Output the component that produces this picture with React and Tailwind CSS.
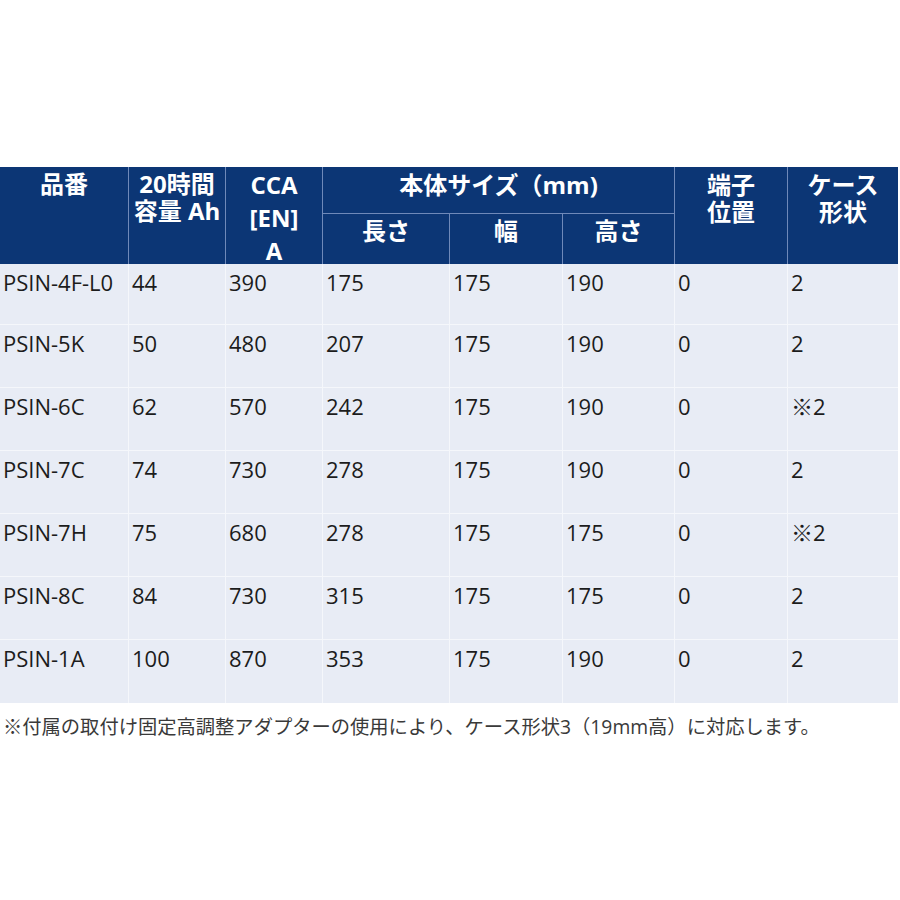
import React from "react";

const FONT = { fontFamily: '"Open Sans", "Noto Sans CJK JP", sans-serif' };

const rows = [
  ["PSIN-4F-L0", "44", "390", "175", "175", "190", "0", "2"],
  ["PSIN-5K", "50", "480", "207", "175", "190", "0", "2"],
  ["PSIN-6C", "62", "570", "242", "175", "190", "0", "※2"],
  ["PSIN-7C", "74", "730", "278", "175", "190", "0", "2"],
  ["PSIN-7H", "75", "680", "278", "175", "175", "0", "※2"],
  ["PSIN-8C", "84", "730", "315", "175", "175", "0", "2"],
  ["PSIN-1A", "100", "870", "353", "175", "190", "0", "2"],
];

const H = "bg-[#0c3675] text-white font-bold text-[24px] leading-[27px] flex flex-col items-center";

export default function App() {
  return (
    <div className="w-[900px] h-[900px] bg-white pt-[167px]" style={FONT}>
      <div className="w-[898px]">
        <div className="grid grid-cols-[128px_96px_96px_126px_112px_111px_112px_110px] grid-rows-[46px_50px] gap-px bg-[#6f89b9]">
          <div className={`${H} row-span-2 pt-[3px]`}>品番</div>
          <div className={`${H} row-span-2 pt-[3px]`}>
            <span>20時間</span>
            <span>容量 Ah</span>
          </div>
          <div className={`${H} row-span-2 pt-[1px] leading-[33px]`}>
            <span>CCA</span>
            <span>[EN]</span>
            <span>A</span>
          </div>
          <div className={`${H} col-span-3 pt-[4px]`}>本体サイズ（mm)</div>
          <div className={`${H} row-span-2 pt-[4px]`}>
            <span>端子</span>
            <span>位置</span>
          </div>
          <div className={`${H} row-span-2 pt-[4px]`}>
            <span>ケース</span>
            <span>形状</span>
          </div>
          <div className={`${H} pt-[3px]`}>長さ</div>
          <div className={`${H} pt-[3px]`}>幅</div>
          <div className={`${H} pt-[3px]`}>高さ</div>
        </div>
        <div className="grid grid-cols-[128px_96px_96px_126px_112px_111px_112px_110px] grid-rows-[60px_62px_62px_62px_62px_62px_63px] gap-px bg-[#f5f7fb]">
          {rows.map((r, i) =>
            r.map((c, j) => (
              <div
                key={`${i}-${j}`}
                className="bg-[#e8ecf5] text-[#1c1c1c] text-[22px] leading-[28px] pt-[4px] pl-[3px]"
              >
                {c}
              </div>
            ))
          )}
        </div>
        <div className="pt-[9px] pl-[3px] text-[19.3px] leading-[30px] text-[#3a3a3a] whitespace-nowrap">
          ※付属の取付け固定高調整アダプターの使用により、ケース形状3（19mm高）に対応します。
        </div>
      </div>
    </div>
  );
}
